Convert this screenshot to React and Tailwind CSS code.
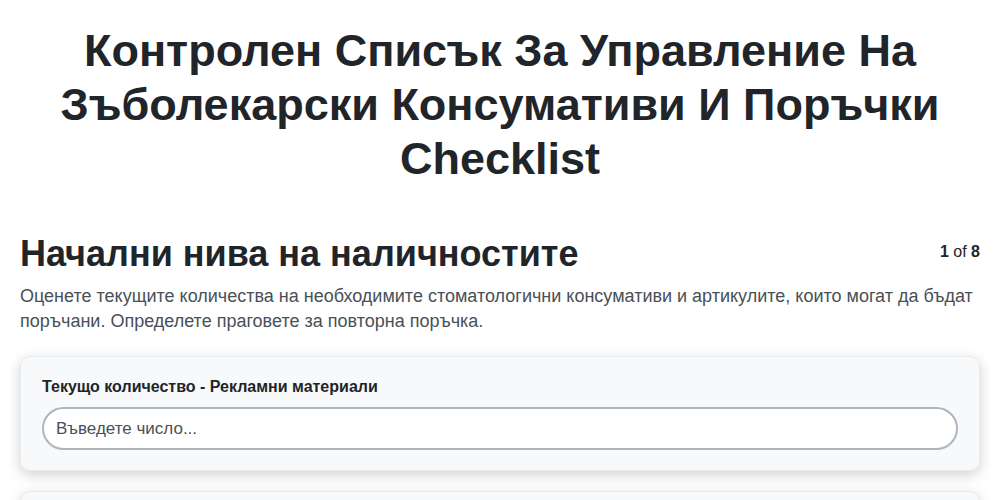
export default function App() {
  return (
    <div className="min-h-screen bg-white font-['Liberation_Sans',Arial,sans-serif] text-[#212529]">
      <div className="mx-auto w-full px-5 pt-6">
        <h1 className="text-center text-[45px] font-bold leading-[54px] px-8">
          Контролен Списък За Управление На Зъболекарски Консумативи И Поръчки Checklist
        </h1>

        <div className="mt-[46px] flex items-start justify-between">
          <h2 className="text-[36px] font-bold leading-[44px]">
            Начални нива на наличностите
          </h2>
          <div className="pt-2 pr-0 text-base text-[#212529]">
            <span className="font-bold">1</span> of <span className="font-bold">8</span>
          </div>
        </div>
        <p className="mt-2 text-[18px] leading-[25px] text-[#495057]">
          Оценете текущите количества на необходимите стоматологични консумативи и артикулите, които могат да бъдат
          поръчани. Определете праговете за повторна поръчка.
        </p>

        <div className="mt-[22px] flex flex-col gap-5">
          <div className="rounded-[10px] border border-[#e9ecef] bg-[#f8f9fa] px-[21px] pt-[18px] pb-[20px] shadow-[0_4px_14px_rgba(0,0,0,0.18)]">
            <label className="block text-base font-bold text-[#212529]">
              Текущо количество - Рекламни материали
            </label>
            <input
              type="text"
              placeholder="Въведете число..."
              className="mt-[8px] h-[43px] w-full rounded-full border-2 border-[#adb5bd] bg-white px-3 text-[17px] text-[#212529] placeholder:text-[#495057] outline-none"
            />
          </div>
          <div className="h-24 rounded-[10px] border border-[#e9ecef] bg-[#f8f9fa] shadow-[0_4px_14px_rgba(0,0,0,0.18)]" />
        </div>
      </div>
    </div>
  );
}
